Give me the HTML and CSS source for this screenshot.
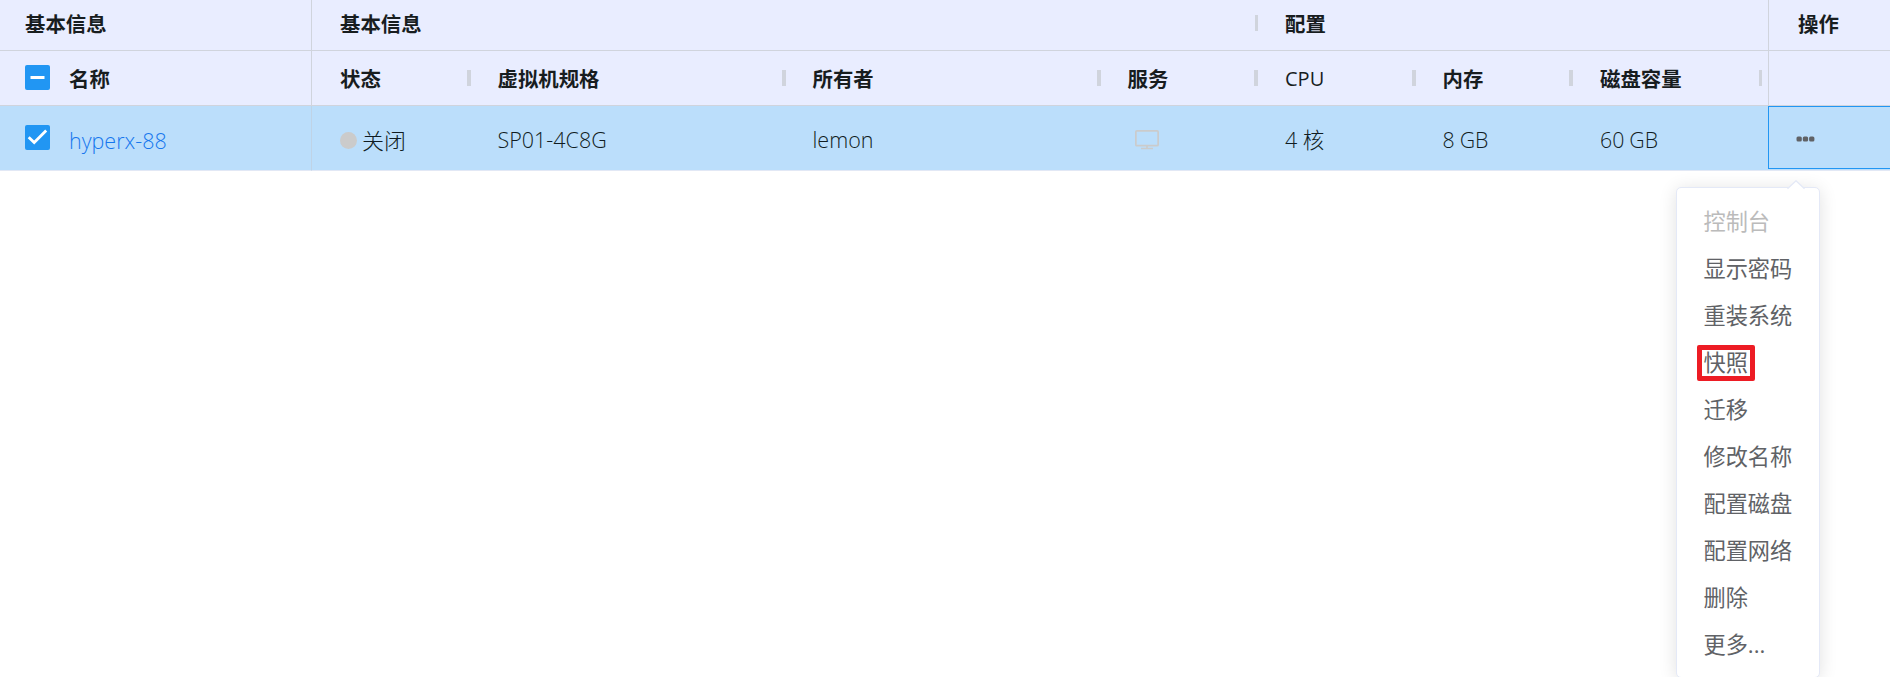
FILE: index.html
```html
<!DOCTYPE html>
<html lang="zh-CN">
<head>
<meta charset="utf-8">
<title>虚拟机</title>
<link rel="stylesheet" href="styles.css">
</head>
<body>
<div class="grid">
  <section class="pinned-left">
    <div class="group-row"><div class="head">基本信息</div></div>
    <div class="head-row">
      <svg class="check" viewBox="0 0 25 25"><rect width="25" height="25" rx="2" fill="#2196f3"/><path d="M5.500 12.500H19.500" stroke="#fff" stroke-width="3"/></svg>
      <div class="head">名称</div>
    </div>
    <div class="data-row">
      <svg class="check" viewBox="0 0 25 25"><rect width="25" height="25" rx="2" fill="#2196f3"/><path d="M3.700 12.200L9.200 17.500L21.200 5.500" fill="none" stroke="#fff" stroke-width="2.800"/></svg>
      <a class="name">hyperx-88</a>
    </div>
  </section>
  <section class="center">
    <div class="group-row">
      <div class="cell span-basic sep"><span class="head">基本信息</span></div>
      <div class="cell span-config"><span class="head">配置</span></div>
    </div>
    <div class="head-row columns">
      <div class="cell sep"><span class="head">状态</span></div>
      <div class="cell sep"><span class="head">虚拟机规格</span></div>
      <div class="cell sep"><span class="head">所有者</span></div>
      <div class="cell sep"><span class="head">服务</span></div>
      <div class="cell sep"><span class="head latin">CPU</span></div>
      <div class="cell sep"><span class="head">内存</span></div>
      <div class="cell sep sep-last"><span class="head">磁盘容量</span></div>
    </div>
    <div class="data-row columns">
      <div class="cell"><i class="dot"></i><span class="value state">关闭</span></div>
      <div class="cell"><span class="value">SP01-4C8G</span></div>
      <div class="cell"><span class="value">lemon</span></div>
      <div class="cell"><svg class="monitor" viewBox="0 0 24 20"><g fill="none" stroke="#cbcbcb" stroke-width="1.700"><rect x=".85" y=".85" width="22.300" height="14.800" rx="1"/><path d="M12 16V18.300M6 18.500H18"/></g></svg></div>
      <div class="cell"><span class="value">4 核</span></div>
      <div class="cell"><span class="value size">8 GB</span></div>
      <div class="cell"><span class="value size">60 GB</span></div>
    </div>
  </section>
  <section class="pinned-right">
    <div class="group-row"><div class="head">操作</div></div>
    <div class="head-row"></div>
    <div class="data-row"><div class="action"><svg class="more" viewBox="0 0 19 6"><g fill="#606266"><rect x=".5" y=".5" width="5.300" height="5" rx="1.500"/><rect x="6.800" y=".5" width="5.300" height="5" rx="1.500"/><rect x="13.100" y=".5" width="5.300" height="5" rx="1.500"/></g></svg></div></div>
  </section>
</div>
<div class="menu">
  <svg class="arrow" viewBox="0 0 18 10"><path d="M0 10V9L9 .7L18 9V10Z" fill="#fff"/><path d="M.5 8.700L9 .8L17.500 8.700" fill="none" stroke="#e4e9f7" stroke-width="1.300"/></svg>
  <div class="item disabled">控制台</div>
  <div class="item">显示密码</div>
  <div class="item">重装系统</div>
  <div class="item"><span class="marked">快照</span></div>
  <div class="item">迁移</div>
  <div class="item">修改名称</div>
  <div class="item">配置磁盘</div>
  <div class="item">配置网络</div>
  <div class="item">删除</div>
  <div class="item">更多...</div>
</div>
</body>
</html>
```
FILE: styles.css
```css
*, *::before, *::after { box-sizing: border-box; }
body {
  margin: 0;
  height: 677px;
  overflow: hidden;
  background: #fff;
  font-family: "Open Sans", "Noto Sans CJK SC", sans-serif;
}
.grid { display: grid; grid-template-columns: 312px 1456px 122px; height: 171px; }
.pinned-left { border-right: 1px solid #d0d4dd; }
.pinned-left .data-row { margin-right: -1px; border-right: 1px solid #bfd3e6; }
.pinned-right { border-left: 1px solid #d0d4dd; }
.group-row, .head-row, .data-row { display: flex; align-items: center; }
.group-row { height: 51px; background: #e9edff; border-bottom: 1px solid #d0d4dd; padding-bottom: 2px; }
.head-row { height: 55px; background: #e9edff; border-bottom: 1px solid #d0d4dd; }
.head-row .head { padding-top: 2px; }
.data-row { height: 65px; background: #bbdefb; border-bottom: 1px solid #e2e8f5; }
.pinned-left > div { padding-left: 25px; }
.pinned-right .group-row { padding-left: 29px; }
.pinned-right .data-row { align-items: flex-start; margin-left: -1px; }
.head { font-size: 20.400px; line-height: 28px; font-weight: 700; color: #181d1f; white-space: nowrap; }
.latin { font-weight: 500; font-size: 20px; }
.check { width: 25px; height: 25px; margin: 0 19px 2px 0; flex: none; }
.name { font-size: 21.500px; line-height: 30px; color: #1677ee; font-weight: 300; padding-top: 6px; }
.columns { display: grid; grid-template-columns: 157.5px 315px 315px 157.5px 157.5px 157.5px 196px; }
.cell { position: relative; display: flex; align-items: center; padding-left: 28px; }
.span-basic { width: 945px; }
.sep::after {
  content: "";
  position: absolute;
  right: -1px;
  top: 50%;
  width: 4px;
  height: 16px;
  margin-top: -8px;
  background: #d0d4dd;
}
.span-basic::after { right: -1px; width: 3px; margin-top: -9px; }
.sep-last::after { right: 6px; width: 3px; }
.value { font-size: 21.500px; line-height: 30px; color: #101c22; font-weight: 300; white-space: nowrap; padding-top: 3px; }
.state { font-size: 22px; }
.size { font-size: 21.300px; word-spacing: -.5px; }
.dot { width: 17px; height: 17px; border-radius: 50%; background: #cbcbcb; margin: 5px 5px 0 0; }
.monitor { width: 24px; height: 20px; margin-left: 7px; margin-top: 4px; }
.action { width: 122px; height: 63px; border: 1px solid #2196f3; border-right: 0; display: flex; align-items: center; padding-left: 27px; }
.more { width: 19px; height: 6px; margin-top: 3px; }
.menu {
  position: absolute;
  left: 1676px;
  top: 187px;
  width: 144px;
  height: 491px;
  border: 1px solid #e4e9f7;
  border-radius: 5px;
  background: #fff;
  box-shadow: 0 2px 18px rgba(0, 0, 0, .12);
  padding: 10px 0 0 26.5px;
}
.arrow { position: absolute; left: 109.5px; top: -8px; width: 18px; height: 10px; }
.item { height: 47px; line-height: 47px; font-size: 22.200px; color: #606266; white-space: nowrap; }
.disabled { color: #bbb; }
.marked { position: relative; }
.marked::after {
  content: "";
  position: absolute;
  left: -7px;
  top: 50%;
  width: 58px;
  height: 36px;
  margin-top: -18px;
  border: 5px solid #ed1c24;
  border-radius: 2px;
}
```
